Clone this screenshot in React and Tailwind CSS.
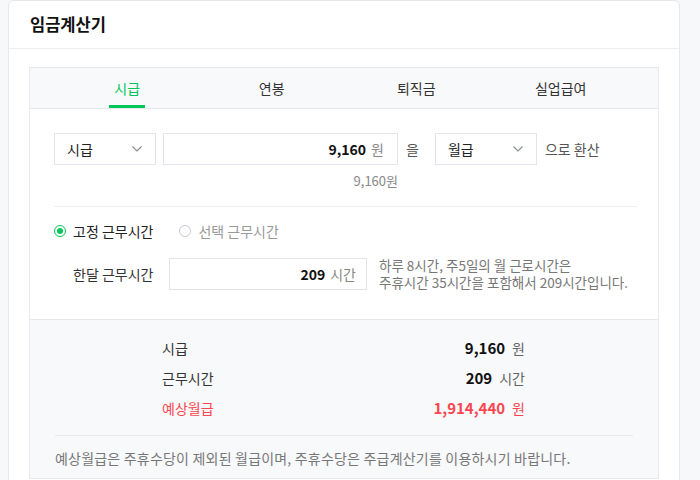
import React from "react";

const font = { fontFamily: '"Noto Sans CJK KR", "Noto Sans", sans-serif' };

function Chevron() {
  return (
    <svg width="12" height="8" viewBox="0 0 12 8" fill="none">
      <path d="M1.5 1.5 L6 6 L10.5 1.5" stroke="#8a8f96" strokeWidth="1.2" />
    </svg>
  );
}

function Select({ label }) {
  return (
    <div className="w-[102px] h-[32px] border border-[#e1e4ea] bg-white flex items-center justify-between pl-3 pr-[12px] text-[14px] text-[#222]">
      <span>{label}</span>
      <Chevron />
    </div>
  );
}

function ResultRow({ label, value, unit, red }) {
  return (
    <div className={"h-[30px] flex items-center justify-between " + (red ? "text-[#fa4650]" : "text-[#333]")}>
      <span className="text-[14px]">{label}</span>
      <span className="flex items-center gap-[7px]">
        <span className={"text-[15px] font-bold " + (red ? "text-[#fa4650]" : "text-[#111]")}>{value}</span>
        <span className={"text-[14px] " + (red ? "text-[#fa4650]" : "text-[#666]")}>{unit}</span>
      </span>
    </div>
  );
}

export default function App() {
  return (
    <div className="w-[700px] h-[480px] overflow-hidden bg-[#f7f8fa]" style={font}>
      <div className="ml-[8px] w-[672px] h-[500px] bg-white border border-[#e6e8ec] rounded-t-[6px]">
        <div className="h-[48px] border-b border-[#eceef1] flex items-center pl-[21px]">
          <h1 className="text-[16.5px] font-semibold text-[#111]">임금계산기</h1>
        </div>
        <div className="pt-[18px] px-[20px]">
          <div className="w-[630px] border border-[#e6e8ec]">
            <div className="h-[41px] bg-[#f8f9fb] border-b border-[#e6e8ec] px-[25px] grid grid-cols-4">
              <div className="flex justify-center">
                <div className="h-full flex items-center px-[5px] border-b-[3px] border-[#03c75a] text-[14px] text-[#03c75a] pt-[3px]">시급</div>
              </div>
              <div className="flex justify-center items-center text-[14px] text-[#333]">연봉</div>
              <div className="flex justify-center items-center text-[14px] text-[#333]">퇴직금</div>
              <div className="flex justify-center items-center text-[14px] text-[#333]">실업급여</div>
            </div>

            <div className="px-[24px] pt-[24px] pb-[28px]">
              <div className="flex items-center">
                <Select label="시급" />
                <div className="ml-[7px] w-[235px] h-[32px] border border-[#e1e4ea] flex items-center justify-end pr-[13px] gap-[5px]">
                  <span className="text-[14px] font-bold text-[#111]">9,160</span>
                  <span className="text-[14px] text-[#888]">원</span>
                </div>
                <span className="ml-[8px] text-[14px] text-[#555]">을</span>
                <div className="ml-[16px]">
                  <Select label="월급" />
                </div>
                <span className="ml-[8px] text-[14px] text-[#555]">으로 환산</span>
              </div>
              <div className="flex mt-[8px]">
                <div className="w-[344px] text-right text-[13px] text-[#888] leading-[16px]">9,160원</div>
              </div>
              <div className="mt-[17px] border-t border-[#eceef1] w-[583px]" />

              <div className="mt-[15px] flex items-center h-[18px] text-[14px]">
                <span className="w-[12px] h-[12px] rounded-full border-[1.5px] border-[#03c75a] flex items-center justify-center">
                  <span className="w-[6px] h-[6px] rounded-full bg-[#03c75a]" />
                </span>
                <span className="ml-[7px] text-[#222]">고정 근무시간</span>
                <span className="ml-[26px] w-[12px] h-[12px] rounded-full border border-[#c8ccd2]" />
                <span className="ml-[7px] text-[#999]">선택 근무시간</span>
              </div>

              <div className="mt-[17px] flex items-center">
                <span className="ml-[19px] w-[96px] text-[14px] text-[#333]">한달 근무시간</span>
                <div className="w-[198px] h-[32px] border border-[#e1e4ea] flex items-center justify-end pr-[10px] gap-[5px]">
                  <span className="text-[14px] font-bold text-[#111]">209</span>
                  <span className="text-[14px] text-[#888]">시간</span>
                </div>
                <div className="ml-[12px] text-[13.5px] leading-[17px] text-[#777]">
                  <div>하루 8시간, 주5일의 월 근로시간은</div>
                  <div>주휴시간 35시간을 포함해서 209시간입니다.</div>
                </div>
              </div>
            </div>

            <div className="bg-[#f8f9fb] border-t border-[#e6e8ec] pt-[13px] pb-[11px]">
              <div className="w-[363px] ml-[132px]">
                <ResultRow label="시급" value="9,160" unit="원" />
                <ResultRow label="근무시간" value="209" unit="시간" />
                <ResultRow label="예상월급" value="1,914,440" unit="원" red />
              </div>
              <div className="mx-[25px] mt-[12px] border-t border-[#e6e8ec]" />
              <div className="px-[25px] pt-[13px] text-[14px] tracking-[0.2px] leading-[18px] text-[#777]">
                예상월급은 주휴수당이 제외된 월급이며, 주휴수당은 주급계산기를 이용하시기 바랍니다.
              </div>
            </div>
          </div>
        </div>
      </div>
    </div>
  );
}
